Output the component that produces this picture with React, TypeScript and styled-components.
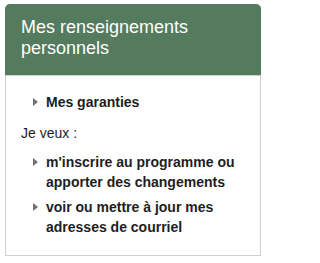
import React from "react";
import styled, { createGlobalStyle } from "styled-components";

const Global = createGlobalStyle`
  html, body { margin: 0; padding: 0; background: #fff; }
  body { font-family: "Liberation Sans", Arial, sans-serif; }
`;

const Page = styled.div`
  padding: 4px 0 0 5px;
`;

const Card = styled.section`
  width: 256px;
  box-sizing: border-box;
  border: 1px solid #cfcfcf;
  border-top: none;
  border-radius: 5px 5px 0 0;
  background: #fff;
`;

const Header = styled.h2`
  margin: 0 -1px;
  box-sizing: border-box;
  height: 72px;
  padding: 13px 16px 0 16px;
  background: #547b5d;
  color: #fff;
  font-size: 18px;
  font-weight: normal;
  line-height: 20.7px;
  border-radius: 5px 5px 0 0;
  border-bottom: 1px solid #cfcfcf;
`;

const Body = styled.div`
  padding: 16px 15px 18px 15px;
  color: #1e1e1e;
  font-size: 14px;
  line-height: 20px;
`;

const List = styled.ul<{ $after?: number }>`
  list-style: none;
  margin: 0 0 ${(p) => p.$after ?? 0}px 0;
  padding: 0 0 0 12px;
  display: flex;
  flex-direction: column;
  gap: 5px;
`;

const Item = styled.li`
  display: flex;
  align-items: flex-start;
  gap: 8px;
  font-weight: bold;
`;

const Arrow = styled.span`
  flex: none;
  width: 0;
  height: 0;
  margin-top: 6px;
  border-top: 4px solid transparent;
  border-bottom: 4px solid transparent;
  border-left: 5px solid #707070;
`;

const Lead = styled.p`
  margin: 0 0 9px 0;
`;

export default function App() {
  return (
    <>
      <Global />
      <Page>
        <Card>
          <Header>Mes renseignements personnels</Header>
          <Body>
            <List $after={11}>
              <Item>
                <Arrow />
                <span>Mes garanties</span>
              </Item>
            </List>
            <Lead>Je veux :</Lead>
            <List>
              <Item>
                <Arrow />
                <span>m'inscrire au programme ou apporter des changements</span>
              </Item>
              <Item>
                <Arrow />
                <span>voir ou mettre à jour mes adresses de courriel</span>
              </Item>
            </List>
          </Body>
        </Card>
      </Page>
    </>
  );
}
